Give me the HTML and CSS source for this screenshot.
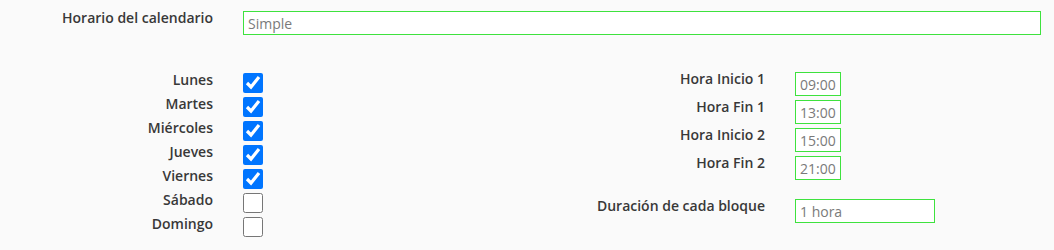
FILE: index.html
```html
<!DOCTYPE html>
<html lang="es">
<head>
<meta charset="utf-8">
<link rel="stylesheet" href="styles.css">
</head>
<body>
<div class="form">
  <div class="row-top">
    <label class="lbl">Horario del calendario</label>
    <input class="inp inp-wide" type="text" value="Simple">
  </div>
  <div class="cols">
    <div class="col col-left">
      <div class="crow"><span class="lbl">Lunes</span><input class="chk" type="checkbox" checked></div>
      <div class="crow"><span class="lbl">Martes</span><input class="chk" type="checkbox" checked></div>
      <div class="crow"><span class="lbl">Miércoles</span><input class="chk" type="checkbox" checked></div>
      <div class="crow"><span class="lbl">Jueves</span><input class="chk" type="checkbox" checked></div>
      <div class="crow"><span class="lbl">Viernes</span><input class="chk" type="checkbox" checked></div>
      <div class="crow"><span class="lbl">Sábado</span><input class="chk" type="checkbox"></div>
      <div class="crow"><span class="lbl">Domingo</span><input class="chk" type="checkbox"></div>
    </div>
    <div class="col col-right">
      <div class="trow"><span class="lbl">Hora Inicio 1</span><input class="inp inp-time" type="text" value="09:00"></div>
      <div class="trow"><span class="lbl">Hora Fin 1</span><input class="inp inp-time" type="text" value="13:00"></div>
      <div class="trow"><span class="lbl">Hora Inicio 2</span><input class="inp inp-time" type="text" value="15:00"></div>
      <div class="trow"><span class="lbl">Hora Fin 2</span><input class="inp inp-time" type="text" value="21:00"></div>
      <div class="trow trow-dur"><span class="lbl">Duración de cada bloque</span><input class="inp inp-dur" type="text" value="1 hora"></div>
    </div>
  </div>
</div>
</body>
</html>
```

FILE: styles.css
```css
html, body {
  margin: 0;
  padding: 0;
  background: #fafafa;
}
body {
  font-family: "Open Sans", "DejaVu Sans", sans-serif;
  font-size: 14px;
  color: #333;
}
.form {
  width: 1054px;
  padding-top: 8px;
}
.lbl {
  display: block;
  width: 213px;
  flex: 0 0 213px;
  text-align: right;
  font-weight: 600;
  line-height: 20px;
  color: #383838;
  white-space: nowrap;
}
.row-top {
  display: flex;
  gap: 30px;
  align-items: flex-start;
}
.inp {
  box-sizing: border-box;
  height: 24px;
  margin: 3px 0 0 0;
  border: 1px solid #3ee23e;
  background: #fff;
  font-family: "Open Sans", "DejaVu Sans", sans-serif;
  font-size: 14px;
  color: #7a7a7a;
  padding: 0 4px;
  outline: none;
}
.inp-wide {
  width: 798px;
}
.inp-time {
  width: 46px;
}
.inp-dur {
  width: 140px;
}
.cols {
  display: flex;
  margin-top: 34px;
}
.col {
  display: flex;
  flex-direction: column;
}
.col-left {
  width: 552px;
  padding-top: 1px;
}
.crow {
  display: flex;
  gap: 30px;
  height: 24px;
  align-items: flex-start;
}
.chk {
  width: 20px;
  height: 20px;
  margin: 3px 0 0 0;
}
.trow {
  display: flex;
  gap: 30px;
  height: 28px;
  align-items: flex-start;
}
.trow-dur {
  margin-top: 15px;
}
```
